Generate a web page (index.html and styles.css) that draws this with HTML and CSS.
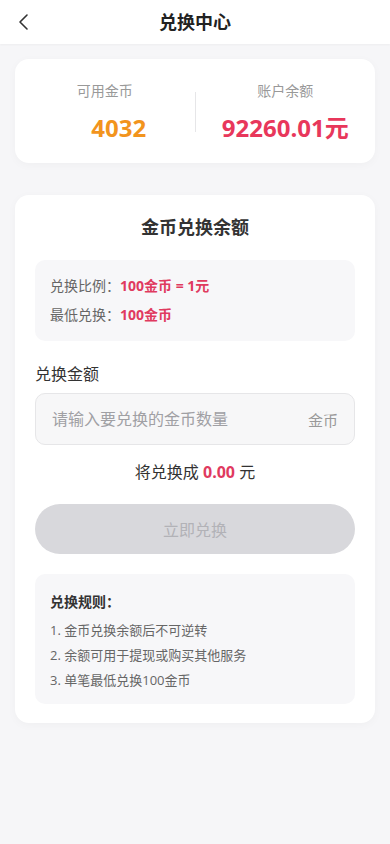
FILE: index.html
```html
<!DOCTYPE html>
<html lang="zh-CN">
<head>
<meta charset="utf-8">
<meta name="viewport" content="width=device-width, initial-scale=1">
<title>兑换中心</title>
<link rel="stylesheet" href="styles.css">
</head>
<body>
<header class="nav">
  <button class="nav-back" aria-label="返回">
    <svg width="12" height="18" viewBox="0 0 12 18"><polyline points="9,2 2,9 9,16" fill="none" stroke="#333" stroke-width="1.6" stroke-linecap="round" stroke-linejoin="round"/></svg>
  </button>
  <h1 class="nav-title">兑换中心</h1>
</header>

<main class="page">
  <section class="card stats">
    <div class="stat">
      <div class="stat-label">可用金币</div>
      <div class="stat-value coin">4032</div>
    </div>
    <div class="stat-divider"></div>
    <div class="stat">
      <div class="stat-label">账户余额</div>
      <div class="stat-value money">92260.01元</div>
    </div>
  </section>

  <section class="card exchange">
    <h2 class="ex-title">金币兑换余额</h2>
    <div class="info-box">
      <div class="info-row"><span class="info-label">兑换比例：</span><span class="info-val">100金币 = 1元</span></div>
      <div class="info-row"><span class="info-label">最低兑换：</span><span class="info-val">100金币</span></div>
    </div>

    <div class="field-label">兑换金额</div>
    <div class="input-wrap">
      <input class="input" type="text" placeholder="请输入要兑换的金币数量">
      <span class="input-unit">金币</span>
    </div>

    <div class="result">将兑换成 <span class="result-num">0.00</span> 元</div>

    <button class="submit" disabled>立即兑换</button>

    <div class="rules">
      <div class="rules-title">兑换规则：</div>
      <div class="rule">1. 金币兑换余额后不可逆转</div>
      <div class="rule">2. 余额可用于提现或购买其他服务</div>
      <div class="rule">3. 单笔最低兑换100金币</div>
    </div>
  </section>
</main>
</body>
</html>
```

FILE: styles.css
```css
* { box-sizing: border-box; }
html, body { margin: 0; padding: 0; }
body {
  background: #f6f6f8;
  font-family: "Open Sans", "Noto Sans CJK SC", sans-serif;
  color: #333;
  width: 390px;
  min-height: 844px;
}
.nav {
  height: 44px;
  background: #fff;
  display: flex;
  align-items: center;
  justify-content: center;
  position: relative;
  box-shadow: 0 1px 2px rgba(0,0,0,0.04);
}
.nav-back {
  position: absolute;
  left: 18px;
  top: 13px;
  border: 0;
  background: none;
  padding: 0;
  width: 14px;
  height: 18px;
  display: flex;
}
.nav-title {
  margin: 0;
  font-size: 18px;
  font-weight: 700;
  color: #222;
  line-height: 44px;
}
.page {
  padding: 15px 15px 40px;
  display: flex;
  flex-direction: column;
  gap: 32px;
}
.card {
  background: #fff;
  border-radius: 14px;
  box-shadow: 0 2px 10px rgba(0,0,0,0.03);
}
.stats {
  display: flex;
  align-items: center;
  padding: 22px 0 20px;
}
.stat {
  flex: 1;
  display: flex;
  flex-direction: column;
  align-items: center;
}
.stat-label {
  font-size: 14px;
  line-height: 20px;
  color: #999;
}
.stat-value {
  margin-top: 12px;
  font-size: 24px;
  line-height: 30px;
  font-weight: 700;
}
.stat-value.coin { color: #f2941d; padding-left: 28px; }
.stat-value.money { color: #e8375b; }
.stat-divider {
  width: 1px;
  height: 40px;
  background: #e6e6e8;
}
.exchange {
  padding: 20px 20px 19px;
}
.ex-title {
  margin: 0;
  text-align: center;
  font-size: 18px;
  line-height: 24px;
  font-weight: 700;
  color: #333;
}
.info-box {
  margin-top: 21px;
  background: #f7f7f9;
  border-radius: 10px;
  padding: 16px 15px;
  display: flex;
  flex-direction: column;
  gap: 9px;
}
.info-row {
  font-size: 14px;
  line-height: 20px;
}
.info-label { color: #666; }
.info-val { color: #e03a5f; font-weight: 700; }
.field-label {
  margin-top: 22px;
  font-size: 16px;
  line-height: 22px;
  color: #333;
}
.input-wrap {
  margin-top: 8px;
  height: 52px;
  background: #f7f7f8;
  border: 1px solid #e6e6e8;
  border-radius: 10px;
  display: flex;
  align-items: center;
  padding: 0 16px;
}
.input {
  flex: 1;
  min-width: 0;
  border: 0;
  background: transparent;
  outline: none;
  font-family: inherit;
  font-size: 16px;
  color: #333;
  padding: 0;
}
.input::placeholder { color: #a0a0a4; }
.input-unit {
  font-size: 15px;
  color: #999;
}
.result {
  margin-top: 16px;
  text-align: center;
  font-size: 16px;
  line-height: 22px;
  color: #333;
}
.result-num { color: #e03a5f; font-weight: 700; }
.submit {
  margin-top: 21px;
  width: 100%;
  height: 50px;
  border: 0;
  border-radius: 25px;
  background: #d8d8dc;
  color: #b2b2b7;
  font-family: inherit;
  font-size: 16px;
  display: block;
}
.rules {
  margin-top: 20px;
  background: #f7f7f9;
  border-radius: 10px;
  padding: 18px 15px 11px;
}
.rules-title {
  font-size: 14px;
  line-height: 20px;
  font-weight: 700;
  color: #333;
  margin-bottom: 6px;
}
.rule {
  font-size: 13px;
  line-height: 25px;
  color: #666;
}
```
